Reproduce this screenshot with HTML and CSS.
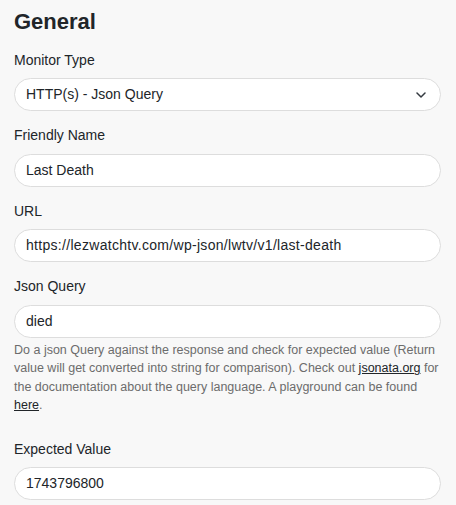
FILE: index.html
```html
<!DOCTYPE html>
<html lang="en">
<head>
<meta charset="utf-8">
<title>General</title>
<link rel="stylesheet" href="styles.css">
</head>
<body>
<div class="page">
  <h1 class="title">General</h1>

  <div class="field">
    <label class="label">Monitor Type</label>
    <div class="control select">
      <span>HTTP(s) - Json Query</span>
      <svg class="chevron" width="10" height="6" viewBox="0 0 10 6"><path d="M1 1l4 4 4-4" fill="none" stroke="#343a40" stroke-width="1.5" stroke-linecap="round" stroke-linejoin="round"/></svg>
    </div>
  </div>

  <div class="field">
    <label class="label">Friendly Name</label>
    <div class="control">Last Death</div>
  </div>

  <div class="field">
    <label class="label">URL</label>
    <div class="control control-url">https://lezwatchtv.com/wp-json/lwtv/v1/last-death</div>
  </div>

  <div class="field field-help">
    <label class="label">Json Query</label>
    <div class="control">died</div>
    <div class="help">Do a json Query against the response and check for expected value (Return<br>value will get converted into string for comparison). Check out <a class="link">jsonata.org</a> for<br>the documentation about the query language. A playground can be found<br><a class="link">here</a>.</div>
  </div>

  <div class="field">
    <label class="label">Expected Value</label>
    <div class="control">1743796800</div>
  </div>
</div>
</body>
</html>
```

FILE: styles.css
```css
html, body {
  margin: 0;
  background: #f8f8f8;
}
body {
  font-family: "Liberation Sans", Arial, sans-serif;
  color: #212529;
}
.page {
  padding: 9px 15px 0 14px;
}
.title {
  font-size: 22px;
  font-weight: 700;
  line-height: 26px;
  margin: 0 0 14.5px;
}
.field {
  margin-bottom: 14px;
}
.field-help {
  margin-bottom: 24px;
}
.label {
  display: block;
  font-size: 14px;
  line-height: 21px;
  margin-bottom: 7.5px;
}
.control {
  box-sizing: border-box;
  height: 33px;
  border: 1px solid #dddddd;
  border-radius: 17px;
  background: #ffffff;
  padding: 5px 11px;
  font-size: 14px;
  line-height: 21px;
  color: #212529;
  white-space: nowrap;
}
.control-url {
  letter-spacing: 0.3px;
}
.select {
  display: flex;
  align-items: center;
  justify-content: space-between;
  padding-right: 14px;
}
.chevron {
  display: block;
}
.help {
  margin-top: 3.5px;
  font-size: 12.5px;
  line-height: 18.4px;
  color: #6c6c6c;
  white-space: nowrap;
}
.link {
  color: #212529;
  text-decoration: underline;
}
```
